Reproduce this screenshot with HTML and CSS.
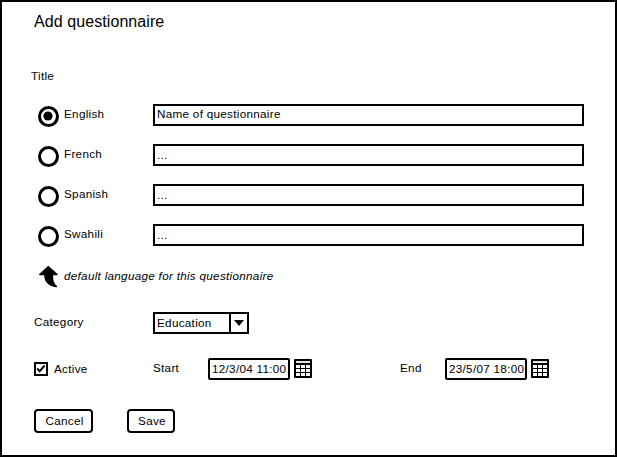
FILE: index.html
```html
<!DOCTYPE html>
<html lang="en">
<head>
<meta charset="utf-8">
<title>Add questionnaire</title>
<link rel="stylesheet" href="styles.css">
</head>
<body>
<main class="frame">
  <h1 class="heading">Add questionnaire</h1>
  <h2 class="title-label">Title</h2>
  <div class="languages">
    <div class="row"><svg class="radio" viewBox="0 0 22 22"><circle class="ring" cx="10.5" cy="10.5" r="9"/><circle cx="10" cy="10" r="4.6"/></svg><span class="name">English</span><div class="field">Name of questionnaire</div></div>
    <div class="row"><svg class="radio" viewBox="0 0 22 22"><circle class="ring" cx="10.5" cy="10.5" r="9"/></svg><span class="name">French</span><div class="field dots">...</div></div>
    <div class="row"><svg class="radio" viewBox="0 0 22 22"><circle class="ring" cx="10.5" cy="10.5" r="9"/></svg><span class="name">Spanish</span><div class="field dots">...</div></div>
    <div class="row"><svg class="radio" viewBox="0 0 22 22"><circle class="ring" cx="10.5" cy="10.5" r="9"/></svg><span class="name">Swahili</span><div class="field dots">...</div></div>
  </div>
  <div class="hint">
    <svg class="arrow" viewBox="0 0 22 24"><path d="M10.3 .7L19.8 9.3Q20 10.2 19 10.2H15.2C14.8 14.5 15.8 18.5 19 21V22.2C11.5 21.8 6.4 17.5 6.2 10.2H2Q.8 10.2 1 9.3Z"/></svg>
    <em class="hint-text">default language for this questionnaire</em>
  </div>
  <div class="category">
    <span class="category-name">Category</span>
    <div class="select"><span class="value">Education</span><span class="drop"><svg class="caret" viewBox="0 0 10 6"><path d="M0 0H10L5 6Z"/></svg></span></div>
  </div>
  <div class="schedule">
    <div class="active"><svg class="check" viewBox="0 0 14 14"><path class="box" d="M1 1H13V13H1Z"/><path class="tick" d="M3.2 6.3L5.7 9.3L10.6 3.5"/></svg><span>Active</span></div>
    <span class="start">Start</span>
    <div class="date">12/3/04 11:00</div>
    <svg class="calendar" viewBox="0 0 18 19"><rect width="18" height="19" rx="1"/><path class="bar" d="M2 2H16V4H2Z"/><path class="cell" d="M2 6h4v3h-4zM7 6h4v3h-4zM12 6h4v3h-4zM2 10h4v3h-4zM7 10h4v3h-4zM12 10h4v3h-4zM2 14h4v3h-4zM7 14h4v3h-4zM12 14h4v3h-4z"/></svg>
    <span class="end">End</span>
    <div class="date">23/5/07 18:00</div>
    <svg class="calendar" viewBox="0 0 18 19"><rect width="18" height="19" rx="1"/><path class="bar" d="M2 2H16V4H2Z"/><path class="cell" d="M2 6h4v3h-4zM7 6h4v3h-4zM12 6h4v3h-4zM2 10h4v3h-4zM7 10h4v3h-4zM12 10h4v3h-4zM2 14h4v3h-4zM7 14h4v3h-4zM12 14h4v3h-4z"/></svg>
  </div>
  <div class="actions"><button class="button cancel">Cancel</button><button class="button save">Save</button></div>
</main>
</body>
</html>
```

FILE: styles.css
```css
* { box-sizing: border-box; }
body { margin: 0; }
svg { flex: none; display: block; }
.frame {
  width: 617px; height: 457px;
  padding: 8px 31px 0 32px;
  border: 2px solid #000;
  background: #fff; color: #000;
  font: 11.7px/20px "Liberation Sans", Arial, sans-serif;
  letter-spacing: .29px;
  white-space: nowrap;
}
.heading { margin: 0; font-size: 16px; line-height: 24px; font-weight: 400; letter-spacing: .08px; }
.title-label { margin: 32px 0 0 -3px; font-size: inherit; line-height: 20px; font-weight: 400; }
.languages { display: grid; gap: 18px; margin-top: 18px; }
.row { display: grid; grid-template-columns: 30px 89px 431px; height: 22px; }
.radio { width: 22px; height: 22px; margin: 2px 0 0 4px; }
.ring { fill: none; stroke: #000; stroke-width: 3; }
.field { height: 22px; border: 2px solid #000; padding-left: 2px; line-height: 16px; }
.dots { line-height: 18px; }
.hint { display: flex; height: 24px; margin-top: 19px; }
.arrow { width: 22px; height: 24px; margin: 0 4px; }
.hint-text { line-height: 22px; }
.category { display: grid; grid-template-columns: 119px 96px; height: 22px; margin-top: 23px; }
.select { display: flex; border: 2px solid #000; line-height: 18px; }
.value { width: 74px; padding-left: 2px; }
.drop { flex: 1; display: flex; align-items: center; justify-content: center; border-left: 2px solid #000; }
.caret { width: 10px; height: 6px; }
.schedule { display: grid; grid-template-columns: 119px 55px 82px 22px 133px 82px 22px; height: 22px; margin-top: 24px; }
.active { display: flex; gap: 6px; line-height: 22px; }
.check { width: 14px; height: 14px; margin-top: 4px; }
.box { fill: #fff; stroke: #000; stroke-width: 2; }
.tick { fill: none; stroke: #000; stroke-width: 2; }
.date { height: 22px; border: 2px solid #000; border-radius: 2px; padding-left: 2px; line-height: 18px; }
.calendar { width: 18px; height: 19px; margin: 1px 0 0 4px; }
.end { padding-left: 88px; }
.bar { fill: #e6e6e6; }
.cell { fill: #fff; }
.actions { display: flex; gap: 34px; margin-top: 29px; }
.button { height: 24px; padding: 0 0 2px 2px; border: 2px solid #000; border-radius: 4px; background: #fff; color: #000; font: inherit; letter-spacing: inherit; }
.cancel { width: 59px; }
.save { width: 48px; }
```
